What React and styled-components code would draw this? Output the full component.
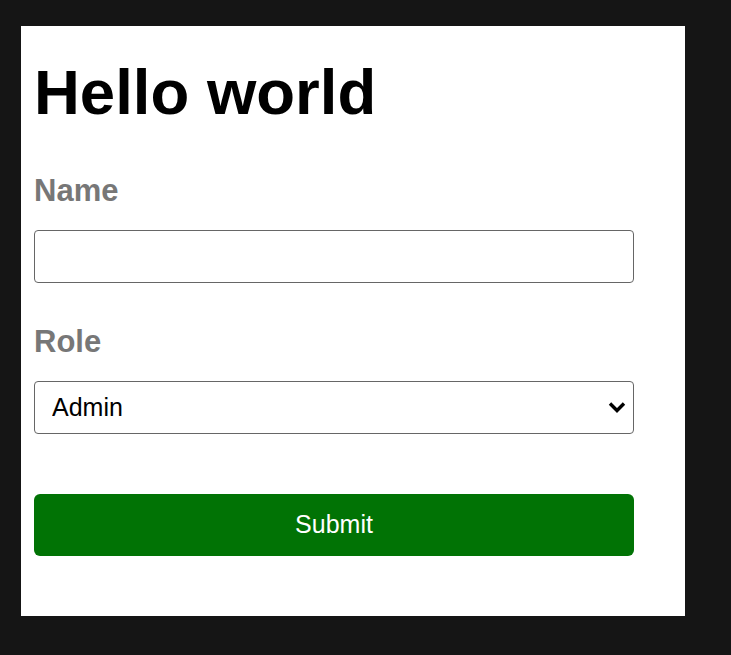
import { createGlobalStyle, styled } from "styled-components"

const GlobalStyle = createGlobalStyle`
  html, body {
    margin: 0;
    background: #151515;
  }
  body {
    font-family: "Liberation Sans", Arial, Helvetica, sans-serif;
  }
`

const Page = styled.div`
  padding: 26px 0 0 21px;
`

const Card = styled.form`
  box-sizing: border-box;
  width: 664px;
  height: 590px;
  background: #fff;
  padding: 35px 52px 0 13px;
  display: flex;
  flex-direction: column;
`

const Title = styled.h1`
  margin: 0;
  font-size: 63.5px;
  line-height: 1;
  font-weight: 700;
  color: #000;
`

const Field = styled.div`
  display: flex;
  flex-direction: column;
  gap: 24px;
  margin-top: ${props => props.$top}px;
`

const Label = styled.label`
  font-size: 31px;
  line-height: 1;
  font-weight: 700;
  color: #777;
`

const TextInput = styled.input`
  box-sizing: border-box;
  width: 600px;
  height: 53px;
  margin: 0;
  border: 1px solid #666;
  border-radius: 4px;
  padding: 0 17px;
  font-family: inherit;
  font-size: 25px;
  outline: none;
`

const SelectWrap = styled.div`
  position: relative;
  width: 600px;
`

const Select = styled.select`
  box-sizing: border-box;
  width: 100%;
  height: 53px;
  margin: 0;
  border: 1px solid #666;
  border-radius: 4px;
  padding: 0 17px;
  appearance: none;
  background: #fff;
  font-family: inherit;
  font-size: 25px;
  color: #000;
  outline: none;
`

const Chevron = styled.svg`
  position: absolute;
  right: 8px;
  top: 19px;
  width: 18px;
  height: 14px;
  pointer-events: none;
`

const SubmitButton = styled.button`
  box-sizing: border-box;
  width: 600px;
  height: 62px;
  margin-top: 60px;
  border: none;
  border-radius: 6px;
  background: #017305;
  color: #fff;
  font-family: inherit;
  font-size: 25px;
  cursor: pointer;
`

export default function App() {
  return (
    <Page>
      <GlobalStyle />
      <Card onSubmit={e => e.preventDefault()}>
        <Title>Hello world</Title>
        <Field $top={50}>
          <Label htmlFor="name">Name</Label>
          <TextInput id="name" type="text" />
        </Field>
        <Field $top={43}>
          <Label htmlFor="role">Role</Label>
          <SelectWrap>
            <Select id="role" defaultValue="admin">
              <option value="admin">Admin</option>
              <option value="user">User</option>
            </Select>
            <Chevron viewBox="0 0 18 14">
              <path d="M2 3.5 L9 10.5 L16 3.5" fill="none" stroke="#000" strokeWidth="3.4" />
            </Chevron>
          </SelectWrap>
        </Field>
        <SubmitButton type="submit">Submit</SubmitButton>
      </Card>
    </Page>
  )
}
